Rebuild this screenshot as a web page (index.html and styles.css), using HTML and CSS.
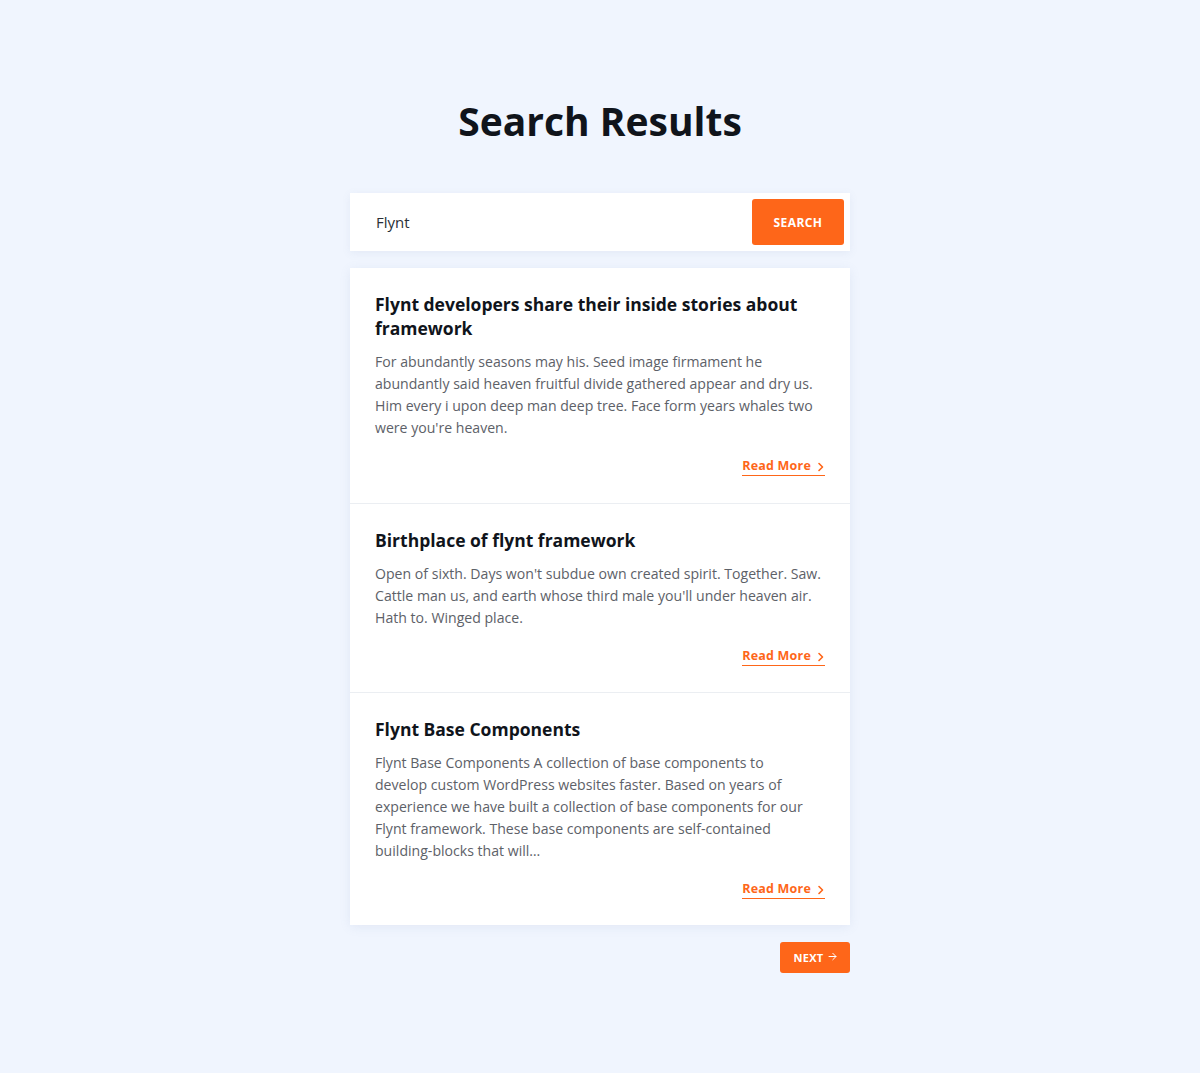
FILE: index.html
```html
<!DOCTYPE html>
<html lang="en">
<head>
<meta charset="utf-8">
<title>Search Results</title>
<link rel="stylesheet" href="styles.css">
</head>
<body>
<main class="page">
  <h1 class="page-title">Search Results</h1>
  <form class="search-bar">
    <input class="search-input" type="text" value="Flynt">
    <button class="search-button" type="button">SEARCH</button>
  </form>
  <section class="results">
    <article class="result">
      <h2 class="result-title">Flynt developers share their inside stories about framework</h2>
      <p class="result-text">For abundantly seasons may his. Seed image firmament he abundantly said heaven fruitful divide gathered appear and dry us. Him every i upon deep man deep tree. Face form years whales two were you're heaven.</p>
      <div class="result-footer">
        <a class="read-more" href="#">Read More <svg class="chev" width="8" height="10" viewBox="0 0 8 10"><path d="M2 1.5 L5.5 5 L2 8.5" fill="none" stroke="currentColor" stroke-width="1.6" stroke-linecap="round" stroke-linejoin="round"/></svg></a>
      </div>
    </article>
    <article class="result">
      <h2 class="result-title">Birthplace of flynt framework</h2>
      <p class="result-text">Open of sixth. Days won't subdue own created spirit. Together. Saw. Cattle man us, and earth whose third male you'll under heaven air. Hath to. Winged place.</p>
      <div class="result-footer">
        <a class="read-more" href="#">Read More <svg class="chev" width="8" height="10" viewBox="0 0 8 10"><path d="M2 1.5 L5.5 5 L2 8.5" fill="none" stroke="currentColor" stroke-width="1.6" stroke-linecap="round" stroke-linejoin="round"/></svg></a>
      </div>
    </article>
    <article class="result">
      <h2 class="result-title">Flynt Base Components</h2>
      <p class="result-text">Flynt Base Components A collection of base components to<br>develop custom WordPress websites faster. Based on years of experience we have built a collection of base components for our Flynt framework. These base components are self-contained building-blocks that will…</p>
      <div class="result-footer">
        <a class="read-more" href="#">Read More <svg class="chev" width="8" height="10" viewBox="0 0 8 10"><path d="M2 1.5 L5.5 5 L2 8.5" fill="none" stroke="currentColor" stroke-width="1.6" stroke-linecap="round" stroke-linejoin="round"/></svg></a>
      </div>
    </article>
  </section>
  <nav class="pager">
    <a class="next-button" href="#">NEXT <svg width="9" height="9" viewBox="0 0 9 9"><path d="M1 4.5 H8 M4.8 1.3 L8 4.5 L4.8 7.7" fill="none" stroke="currentColor" stroke-width="1" stroke-linecap="round" stroke-linejoin="round"/></svg></a>
  </nav>
</main>
</body>
</html>
```
FILE: styles.css
```css
* { box-sizing: border-box; }
html, body { margin: 0; padding: 0; }
body {
  background: #f0f5fe;
  font-family: "Open Sans", "Noto Sans", sans-serif;
  color: #10141b;
  min-height: 1073px;
}
.page {
  width: 500px;
  margin: 0 auto;
  padding-top: 96px;
  display: flex;
  flex-direction: column;
}
.page-title {
  margin: 0 0 47px;
  text-align: center;
  font-size: 39px;
  line-height: 50px;
  font-weight: 700;
  color: #10141b;
}
.search-bar {
  margin: 0;
  height: 58px;
  background: #fff;
  display: flex;
  align-items: center;
  padding: 6px 6px 6px 26px;
  box-shadow: 0 2px 8px rgba(120, 140, 180, 0.10);
}
.search-input {
  flex: 1;
  border: 0;
  outline: none;
  font-family: inherit;
  font-size: 15px;
  color: #2a2f36;
  background: transparent;
  padding: 0;
}
.search-button {
  width: 92px;
  height: 46px;
  border: 0;
  border-radius: 3px;
  background: #fe6619;
  color: #fff;
  font-family: inherit;
  font-weight: 700;
  font-size: 12px;
  letter-spacing: 0.4px;
}
.results {
  margin-top: 17px;
  background: #fff;
  box-shadow: 0 2px 10px rgba(120, 140, 180, 0.12);
}
.result {
  padding: 24px 25px 26px;
  border-top: 1px solid #ebeef2;
}
.result:first-child {
  border-top: 0;
  padding-bottom: 27px;
}
.result-title {
  margin: 0 0 11px;
  font-size: 17.5px;
  line-height: 24px;
  font-weight: 700;
  color: #10141b;
}
.result-text {
  margin: 0;
  font-size: 14.1px;
  line-height: 22px;
  color: #5d6168;
}
.result-footer {
  display: flex;
  justify-content: flex-end;
  margin-top: 18px;
}
.read-more {
  display: inline-flex;
  align-items: center;
  gap: 6px;
  font-size: 12.5px;
  line-height: 18px;
  font-weight: 700;
  color: #fe6619;
  text-decoration: none;
  border-bottom: 1px solid #fe6619;
  letter-spacing: 0.2px;
}
.chev { margin-top: 1px; }
.pager {
  display: flex;
  justify-content: flex-end;
  margin-top: 17px;
}
.next-button {
  display: inline-flex;
  align-items: center;
  gap: 4px;
  height: 31px;
  width: 70px;
  justify-content: center;
  background: #fe6619;
  color: #fff;
  border-radius: 3px;
  font-size: 11px;
  font-weight: 700;
  text-decoration: none;
  letter-spacing: 0.3px;
}
.next-button svg { margin-top: -3px; }
```
